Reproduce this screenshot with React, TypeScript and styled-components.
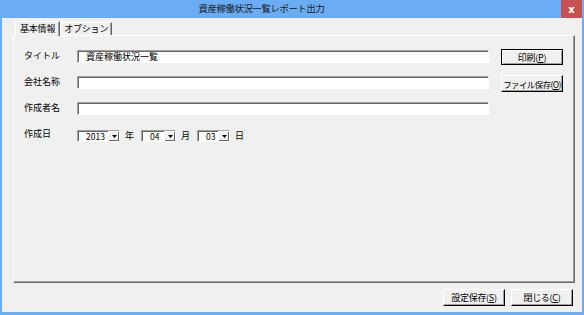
import styled, { createGlobalStyle } from "styled-components";

const GlobalStyle = createGlobalStyle`
    html, body {
        margin: 0;
        padding: 0;
        background: #6aadf4;
    }
    body {
        font-family: "Noto Sans CJK JP", "Noto Sans", sans-serif;
        font-size: 9px;
        color: #000;
    }
`;

const Window = styled.div`
    width: 584px;
    height: 315px;
    display: flex;
    flex-direction: column;
    background: #6aadf4;
    box-sizing: border-box;
`;

const TitleBar = styled.div`
    height: 18px;
    display: flex;
    align-items: flex-start;
`;

const Title = styled.div`
    flex: 1;
    text-align: center;
    padding-right: 38px;
    font-size: 9.3px;
    letter-spacing: -0.3px;
    line-height: 17px;
    color: #1a1a1a;
`;

const CloseButton = styled.div`
    width: 21px;
    height: 18px;
    margin-right: 2px;
    background: #c75050;
    color: #fff;
    display: flex;
    align-items: center;
    justify-content: center;
    font-family: "DejaVu Sans", sans-serif;
    font-weight: bold;
    font-size: 10px;
`;

const Body = styled.div`
    flex: 1;
    margin: 0 2px 3px 2px;
    background: #f0f0f0;
    padding: 2px 7px 0 11px;
    display: flex;
    flex-direction: column;
`;

const TabStrip = styled.div`
    display: flex;
    align-items: flex-end;
    height: 15px;
    padding-left: 2px;
`;

const Tab = styled.div<{ $active?: boolean }>`
    height: ${(p) => (p.$active ? "15px" : "13px")};
    padding: 0 ${(p) => (p.$active ? "4px" : "3px")};
    box-sizing: border-box;
    border-top: 1px solid #fff;
    border-left: 1px solid #fff;
    border-right: 1px solid #696969;
    box-shadow: inset -1px 0 0 #a0a0a0;
    font-size: 9px;
    letter-spacing: -0.2px;
    line-height: ${(p) => (p.$active ? "13px" : "12px")};
    background: #f0f0f0;
    margin-bottom: ${(p) => (p.$active ? "-1px" : "0")};
    position: relative;
    z-index: ${(p) => (p.$active ? 1 : 0)};
`;

const Panel = styled.div`
    height: 248px;
    box-sizing: border-box;
    border-top: 1px solid #fff;
    border-left: 1px solid #fff;
    border-right: 1px solid #696969;
    border-bottom: 1px solid #696969;
    box-shadow: inset -1px -1px 0 #a0a0a0;
    padding: 13px 10px 0 10px;
    display: grid;
    grid-template-columns: 41px 412px 62px;
    grid-auto-rows: 16px;
    column-gap: 12px;
    row-gap: 10px;
    align-content: start;
`;

const Label = styled.div`
    font-size: 9px;
    line-height: 14px;
`;

const TextBox = styled.div`
    height: 13px;
    box-sizing: border-box;
    background: #fff;
    border-top: 1px solid #a0a0a0;
    border-left: 1px solid #a0a0a0;
    border-right: 1px solid #fff;
    border-bottom: 1px solid #fff;
    box-shadow: inset 1px 1px 0 #696969;
    font-size: 9px;
    line-height: 11px;
    padding-left: 8px;
    margin-top: 1px;
`;

const Button = styled.div<{ $default?: boolean; $height?: number; $tight?: boolean }>`
    width: 62px;
    height: ${(p) => p.$height ?? 16}px;
    box-sizing: border-box;
    background: #f0f0f0;
    border-top: 1px solid ${(p) => (p.$default ? "#000" : "#fff")};
    border-left: 1px solid ${(p) => (p.$default ? "#000" : "#fff")};
    border-right: 1px solid #000;
    border-bottom: 1px solid #000;
    box-shadow: ${(p) =>
        p.$default
            ? "inset 1px 1px 0 #fff, inset -1px -1px 0 #a0a0a0"
            : "inset -1px -1px 0 #a0a0a0"};
    display: flex;
    align-items: center;
    justify-content: center;
    font-size: ${(p) => (p.$tight ? "8.5px" : "9px")};
    white-space: nowrap;
    letter-spacing: ${(p) => (p.$tight ? "-0.6px" : "-0.3px")};
    overflow: hidden;
`;

const Mnemonic = styled.span`
    text-decoration: underline;
`;

const DateRow = styled.div`
    grid-column: 2 / 3;
    display: flex;
    align-items: center;
    gap: 5px;
`;

const Combo = styled.div<{ $width: number }>`
    width: ${(p) => p.$width}px;
    height: 12px;
    box-sizing: border-box;
    background: #fff;
    border-top: 1px solid #a0a0a0;
    border-left: 1px solid #a0a0a0;
    border-right: 1px solid #fff;
    border-bottom: 1px solid #fff;
    box-shadow: inset 1px 1px 0 #696969;
    display: flex;
    margin-top: 1px;
`;

const ComboValue = styled.div`
    flex: 1;
    font-size: 8.5px;
    line-height: 10px;
    padding-left: 8px;
`;

const ComboArrow = styled.div`
    width: 11px;
    background: #f0f0f0;
    border-left: 1px solid #fff;
    border-top: 1px solid #fff;
    box-shadow: inset -1px -1px 0 #696969;
    box-sizing: border-box;
    display: flex;
    align-items: center;
    justify-content: center;
`;

const Unit = styled.span`
    font-size: 9px;
    margin-right: 2px;
`;

const Footer = styled.div`
    display: flex;
    justify-content: flex-end;
    gap: 6px;
    padding: 6px 2px 0 0;
`;

function Arrow() {
    return (
        <svg width="5" height="3" viewBox="0 0 5 3">
            <path d="M0 0H5L2.5 3Z" fill="#000" />
        </svg>
    );
}

export default function App() {
    return (
        <>
            <GlobalStyle />
            <Window>
                <TitleBar>
                    <Title>資産稼働状況一覧レポート出力</Title>
                    <CloseButton>x</CloseButton>
                </TitleBar>
                <Body>
                    <TabStrip>
                        <Tab $active>基本情報</Tab>
                        <Tab>オプション</Tab>
                    </TabStrip>
                    <Panel>
                        <Label>タイトル</Label>
                        <TextBox>資産稼働状況一覧</TextBox>
                        <Button $default>
                            印刷(<Mnemonic>P</Mnemonic>)
                        </Button>

                        <Label>会社名称</Label>
                        <TextBox />
                        <Button $height={17} $tight>
                            ファイル保存(<Mnemonic>O</Mnemonic>)
                        </Button>

                        <Label>作成者名</Label>
                        <TextBox />
                        <div />

                        <Label>作成日</Label>
                        <DateRow>
                            <Combo $width={43}>
                                <ComboValue>2013</ComboValue>
                                <ComboArrow>
                                    <Arrow />
                                </ComboArrow>
                            </Combo>
                            <Unit>年</Unit>
                            <Combo $width={35}>
                                <ComboValue>04</ComboValue>
                                <ComboArrow>
                                    <Arrow />
                                </ComboArrow>
                            </Combo>
                            <Unit>月</Unit>
                            <Combo $width={33}>
                                <ComboValue>03</ComboValue>
                                <ComboArrow>
                                    <Arrow />
                                </ComboArrow>
                            </Combo>
                            <Unit>日</Unit>
                        </DateRow>
                    </Panel>
                    <Footer>
                        <Button $height={17}>
                            設定保存(<Mnemonic>S</Mnemonic>)
                        </Button>
                        <Button $height={17}>
                            閉じる(<Mnemonic>C</Mnemonic>)
                        </Button>
                    </Footer>
                </Body>
            </Window>
        </>
    );
}
